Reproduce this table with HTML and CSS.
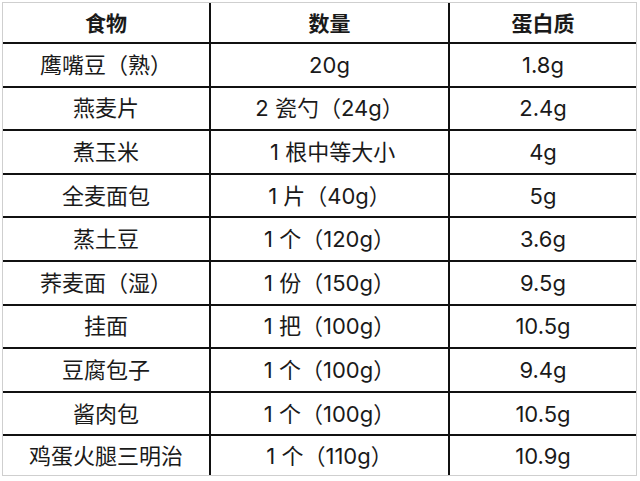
FILE: index.html
```html
<!DOCTYPE html>
<html lang="zh">
<head>
<meta charset="utf-8">
<link rel="stylesheet" href="styles.css">
</head>
<body>
<div class="frame">
  <div class="grid">
    <div class="cell head">食物</div>
    <div class="cell head">数量</div>
    <div class="cell head last-col">蛋白质</div>

    <div class="cell">鹰嘴豆（熟）</div>
    <div class="cell">20g</div>
    <div class="cell last-col">1.8g</div>

    <div class="cell">燕麦片</div>
    <div class="cell">2 瓷勺（24g）</div>
    <div class="cell last-col">2.4g</div>

    <div class="cell">煮玉米</div>
    <div class="cell">&nbsp;1 根中等大小</div>
    <div class="cell last-col">4g</div>

    <div class="cell">全麦面包</div>
    <div class="cell">1 片（40g）</div>
    <div class="cell last-col">5g</div>

    <div class="cell">蒸土豆</div>
    <div class="cell">1 个（120g）</div>
    <div class="cell last-col">3.6g</div>

    <div class="cell">荞麦面（湿）</div>
    <div class="cell">1 份（150g）</div>
    <div class="cell last-col">9.5g</div>

    <div class="cell">挂面</div>
    <div class="cell">1 把（100g）</div>
    <div class="cell last-col">10.5g</div>

    <div class="cell">豆腐包子</div>
    <div class="cell">1 个（100g）</div>
    <div class="cell last-col">9.4g</div>

    <div class="cell">酱肉包</div>
    <div class="cell">1 个（100g）</div>
    <div class="cell last-col">10.5g</div>

    <div class="cell last-row">鸡蛋火腿三明治</div>
    <div class="cell last-row">1 个（110g）</div>
    <div class="cell last-row last-col">10.9g</div>
  </div>
</div>
</body>
</html>
```

FILE: styles.css
```css
html, body {
  margin: 0;
  padding: 0;
  background: #ffffff;
}

body {
  padding: 2px 0 0 2px;
  font-family: "Inter", "Noto Sans CJK SC", sans-serif;
  color: #1a1a1a;
}

.frame {
  width: 633px;
  height: 472px;
  border: 1px solid #cfcfcf;
}

.grid {
  display: grid;
  grid-template-columns: 208px 239px 1fr;
  grid-template-rows: 41px repeat(9, 43.6px) 1fr;
  height: 100%;
}

.cell {
  display: flex;
  align-items: center;
  justify-content: center;
  font-size: 22px;
  font-weight: 400;
  line-height: 1;
  white-space: pre;
  border-right: 2px solid #111111;
  border-bottom: 2px solid #111111;
  box-sizing: border-box;
}

.head {
  font-family: "Noto Sans CJK SC", sans-serif;
  font-weight: 700;
  font-size: 21px;
}

.last-col {
  border-right: none;
}

.last-row {
  border-bottom: none;
}
```
